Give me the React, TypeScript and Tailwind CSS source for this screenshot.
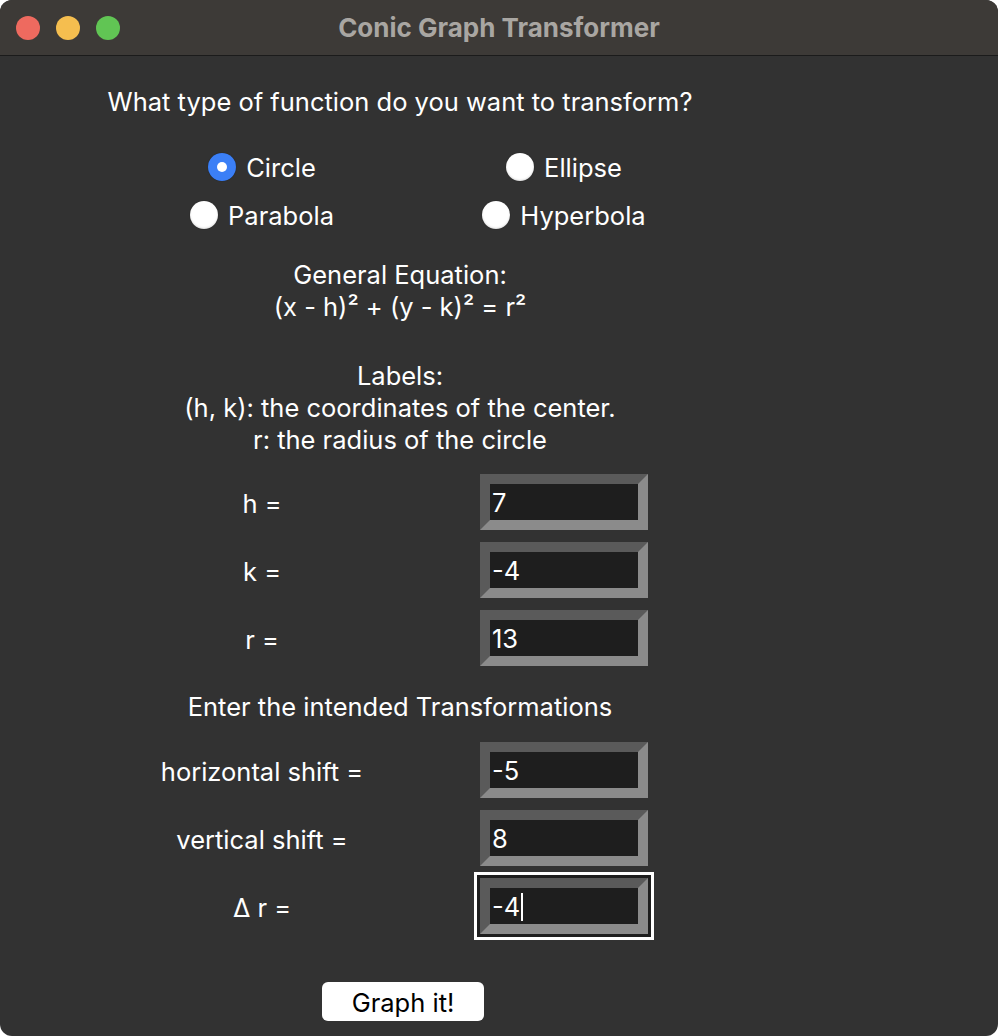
import React, { useState } from 'react';

const font = { fontFamily: 'Inter, "Noto Sans", sans-serif' };

interface RadioProps {
  label: string;
  checked: boolean;
  onSelect: () => void;
}

const Radio: React.FC<RadioProps> = ({ label, checked, onSelect }) => (
  <button onClick={onSelect} className="flex items-center gap-[10px] text-[25.5px] text-white leading-[32px]">
    {checked ? (
      <span className="w-[28px] h-[28px] rounded-full bg-[#3b7ff6] flex items-center justify-center shadow-[0_0_1px_rgba(0,0,0,0.6)]">
        <span className="w-[10px] h-[10px] rounded-full bg-white" />
      </span>
    ) : (
      <span className="w-[28px] h-[28px] rounded-full bg-white shadow-[inset_0_-1px_2px_rgba(0,0,0,0.15),0_0_1px_rgba(0,0,0,0.6)]" />
    )}
    <span className="translate-y-[1px]">{label}</span>
  </button>
);

const Entry: React.FC<{ value: string; focused?: boolean }> = ({ value, focused }) => {
  const box = (
    <div className="w-[168px] h-[56px] border-[10px] border-t-[#5a5a5a] border-l-[#5a5a5a] border-b-[#8b8b8b] border-r-[#8b8b8b] bg-[#1e1e1e] flex items-center">
      <span className="pl-[2px] translate-y-[1px] text-[25.5px] leading-[32px] text-white flex items-center">
        {value}
        {focused && <span className="inline-block w-[2px] h-[28px] bg-white ml-[1px]" />}
      </span>
    </div>
  );
  if (!focused) return box;
  return <div className="border-[3px] border-white p-[3px] bg-[#1e1e1e]">{box}</div>;
};

const Row: React.FC<{ label: string; value: string; focused?: boolean }> = ({ label, value, focused }) => (
  <div className="flex items-center ml-[112px]">
    <div className="w-[300px] translate-y-[2px] text-center text-[25.5px] leading-[32px] text-white">{label}</div>
    <div className="w-[304px] flex justify-center">
      <Entry value={value} focused={focused} />
    </div>
  </div>
);

const Centered: React.FC<{ children: React.ReactNode; className?: string }> = ({ children, className }) => (
  <div className={`w-[600px] ml-[100px] text-center text-[25.5px] leading-[32px] text-white ${className ?? ''}`}>{children}</div>
);

export default function App() {
  const [shape, setShape] = useState('Circle');

  return (
    <div className="w-[998px] h-[1036px] bg-white" style={font}>
      <div className="w-full h-full rounded-[12px] overflow-hidden bg-[#323232] flex flex-col">
        <div className="h-[56px] bg-[#3d3a37] border-b border-[#1b1b1b] flex items-center relative shrink-0">
          <div className="flex gap-[16px] pl-[16px]">
            <span className="w-[24px] h-[24px] rounded-full bg-[#ee6a5f]" />
            <span className="w-[24px] h-[24px] rounded-full bg-[#f5be4f]" />
            <span className="w-[24px] h-[24px] rounded-full bg-[#61c554]" />
          </div>
          <div className="absolute inset-0 flex items-center justify-center text-[26px] font-bold text-[#a9a6a2]">
            Conic Graph Transformer
          </div>
        </div>

        <Centered className="mt-[30px]">What type of function do you want to transform?</Centered>

        <div className="flex ml-[112px] mt-[33px]">
          <div className="w-[300px] flex justify-center">
            <Radio label="Circle" checked={shape === 'Circle'} onSelect={() => setShape('Circle')} />
          </div>
          <div className="w-[304px] flex justify-center">
            <Radio label="Ellipse" checked={shape === 'Ellipse'} onSelect={() => setShape('Ellipse')} />
          </div>
        </div>
        <div className="flex ml-[112px] mt-[16px]">
          <div className="w-[300px] flex justify-center">
            <Radio label="Parabola" checked={shape === 'Parabola'} onSelect={() => setShape('Parabola')} />
          </div>
          <div className="w-[304px] flex justify-center">
            <Radio label="Hyperbola" checked={shape === 'Hyperbola'} onSelect={() => setShape('Hyperbola')} />
          </div>
        </div>

        <Centered className="mt-[28px]">
          <div>General Equation:</div>
          <div>(x - h)² + (y - k)² = r²</div>
        </Centered>

        <Centered className="mt-[37px] leading-[31.5px]">
          <div>Labels:</div>
          <div>(h, k): the coordinates of the center.</div>
          <div>r: the radius of the circle</div>
        </Centered>

        <div className="flex flex-col gap-[12px] mt-[18px]">
          <Row label="h =" value="7" />
          <Row label="k =" value="-4" />
          <Row label="r =" value="13" />
        </div>

        <Centered className="mt-[25px]">Enter the intended Transformations</Centered>

        <div className="flex flex-col mt-[19px]">
          <Row label="horizontal shift =" value="-5" />
          <div className="h-[12px]" />
          <Row label="vertical shift =" value="8" />
          <div className="h-[6px]" />
          <Row label="Δ r =" value="-4" focused />
        </div>

        <div className="ml-[322px] mt-[42px]">
          <button className="w-[162px] h-[39px] rounded-[6px] bg-white text-black text-[25.5px] leading-[32px]">
            <span className="inline-block translate-y-[1px]">Graph it!</span>
          </button>
        </div>
      </div>
    </div>
  );
}
